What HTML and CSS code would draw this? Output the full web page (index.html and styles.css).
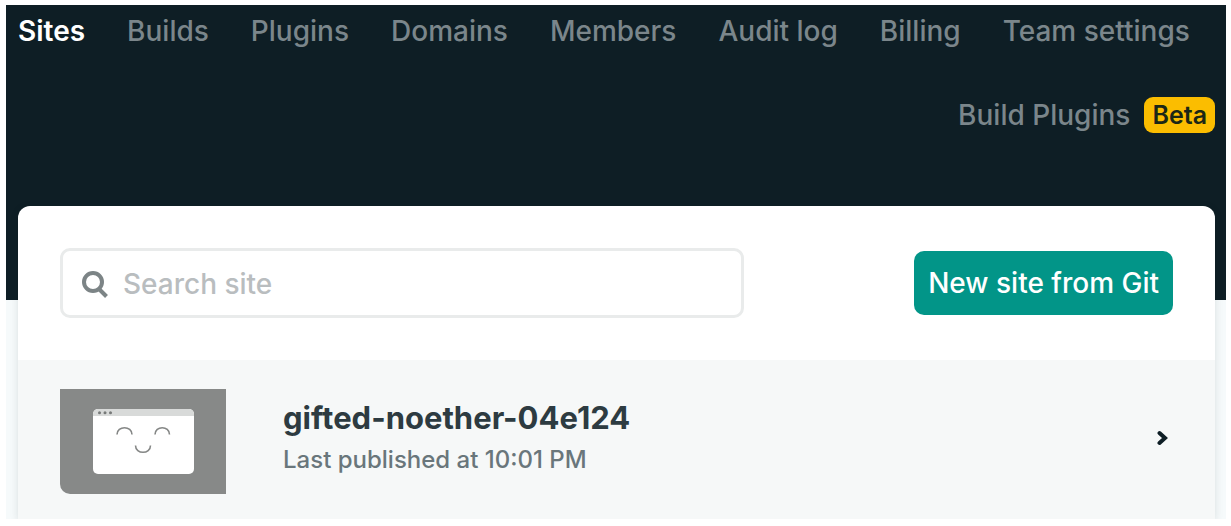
FILE: index.html
```html
<!DOCTYPE html>
<html lang="en">
<head>
<meta charset="utf-8">
<meta name="viewport" content="width=device-width, initial-scale=1">
<title>Sites</title>
<link rel="stylesheet" href="styles.css">
</head>
<body>
<div class="shell">
  <header class="header">
    <nav class="nav" aria-label="Team">
      <a class="nav-link current" href="#" aria-current="page">Sites</a>
      <a class="nav-link" href="#">Builds</a>
      <a class="nav-link" href="#">Plugins</a>
      <a class="nav-link" href="#">Domains</a>
      <a class="nav-link" href="#">Members</a>
      <a class="nav-link" href="#">Audit log</a>
      <a class="nav-link" href="#">Billing</a>
      <a class="nav-link" href="#">Team settings</a>
    </nav>
    <div class="subnav">
      <a class="nav-link" href="#">Build Plugins</a>
      <span class="badge">Beta</span>
    </div>
  </header>
  <main class="card">
    <div class="toolbar">
      <label class="search">
        <svg class="search-icon" viewBox="0 0 26 27" aria-hidden="true"><circle cx="11" cy="11" r="9" fill="none" stroke="currentColor" stroke-width="4"/><path d="M17 18L24.500 25.500" fill="none" stroke="currentColor" stroke-width="4"/></svg>
        <input class="search-input" type="text" placeholder="Search site" aria-label="Search site">
      </label>
      <button class="button" type="button">New site from Git</button>
    </div>
    <a class="site" href="#">
      <svg class="thumb" viewBox="0 0 166 105" aria-hidden="true">
        <rect width="166" height="105" fill="#878988"/>
        <rect x="33" y="20" width="101" height="65" rx="5" fill="#fff"/>
        <path d="M33 27v-2a5 5 0 0 1 5-5h91a5 5 0 0 1 5 5v2z" fill="#d8dad9"/>
        <g fill="#777a79"><circle cx="39.500" cy="23.700" r="1.500"/><circle cx="45" cy="23.700" r="1.500"/><circle cx="50.500" cy="23.700" r="1.500"/></g>
        <g fill="none" stroke="#858786" stroke-width="1.600"><path d="M57 45.500C57 36.500 72 36.500 72 45.500M95 45.500C95 36.500 109.500 36.500 109.500 45.500M75.500 56.500C75.500 65.500 90.500 65.500 90.500 56.500"/></g>
      </svg>
      <div class="site-text">
        <h2 class="site-name">gifted-noether-04e124</h2>
        <p class="site-meta">Last published at 10:01 PM</p>
      </div>
      <svg class="chevron" viewBox="0 0 12 16" aria-hidden="true"><path d="M2.500 3L8 8L2.500 13" fill="none" stroke="currentColor" stroke-width="4" stroke-linecap="round"/></svg>
    </a>
  </main>
</div>
</body>
</html>
```
FILE: styles.css
```css
* { box-sizing: border-box; }
body {
  margin: 0;
  padding: 5px 5px 7px 6px;
  background: #fff;
  color: #2d3b41;
  font-family: Inter, "Liberation Sans", sans-serif;
}
.shell { background: #f6fafb; overflow: hidden; }
.header {
  padding: 8px 11px 167px 12px;
  background: #0e1e25;
  font-size: 28px;
  line-height: 36px;
  font-weight: 500;
}
.nav { display: flex; gap: 42px; white-space: nowrap; }
.nav-link { color: #7b868b; text-decoration: none; }
.nav-link.current { color: #fff; font-weight: 600; }
.subnav {
  display: flex;
  justify-content: flex-end;
  align-items: center;
  gap: 14px;
  margin-top: 48px;
}
.badge {
  padding: 0 8px;
  border-radius: 9px;
  background: #fbbd00;
  color: #1b2716;
  font-size: 25px;
  font-weight: 600;
}
.card {
  margin: -94px 11px 0 12px;
  border-radius: 12px 12px 0 0;
  background: #fff;
  box-shadow: 0 2px 8px rgba(14, 30, 37, 0.12);
}
.toolbar {
  display: flex;
  justify-content: space-between;
  align-items: center;
  padding: 42px;
}
.search {
  display: flex;
  align-items: center;
  gap: 15px;
  flex: 0 1 684px;
  height: 70px;
  padding: 2px 19px 0;
  border: 3px solid #e9ebeb;
  border-radius: 10px;
}
.search-icon { width: 26px; height: 27px; flex: none; color: #7c8486; }
.search-input {
  flex: 1;
  min-width: 0;
  padding: 0;
  border: 0;
  outline: 0;
  background: none;
  color: #2d3b41;
  font: 500 28px/36px Inter, "Liberation Sans", sans-serif;
}
.search-input::placeholder { color: #b9bdbf; opacity: 1; }
.button {
  padding: 14px;
  border: 0;
  border-radius: 10px;
  background: #029588;
  color: #fff;
  font: 500 28px/36px Inter, "Liberation Sans", sans-serif;
}
.site {
  display: flex;
  align-items: center;
  padding: 29px 46px 25px 42px;
  background: #f6f8f8;
  color: inherit;
  text-decoration: none;
}
.thumb { width: 166px; height: 105px; flex: none; border-radius: 0 0 0 10px; }
.site-text { flex: 1; margin: 0 0 8px 57px; }
.site-name { margin: 0; font-size: 31px; line-height: 44px; font-weight: 700; }
.site-meta { margin: 0; color: #69767b; font-size: 24px; line-height: 40px; font-weight: 500; }
.chevron { width: 12px; height: 16px; margin-bottom: 8px; color: #0e1e25; }
```
